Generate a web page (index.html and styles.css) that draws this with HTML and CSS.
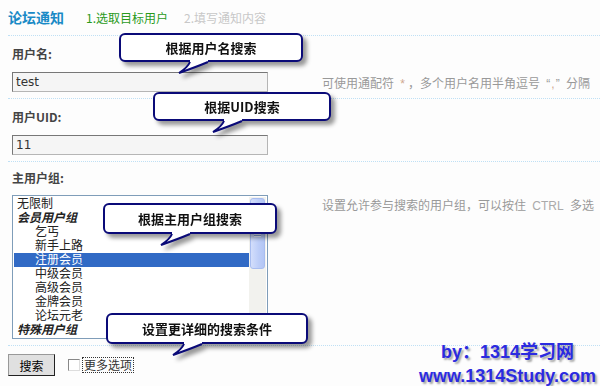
FILE: index.html
```html
<!DOCTYPE html>
<html lang="zh-CN">
<head>
  <meta charset="UTF-8">
  <title>论坛通知</title>
  <link rel="stylesheet" href="styles.css">
</head>
<body>
  <div class="page">
    <div class="header">
      <h1 class="title">论坛通知</h1>
      <span class="step step-active">1.选取目标用户</span>
      <span class="step">2.填写通知内容</span>
    </div>

    <div class="row">
      <div class="label">用户名:</div>
      <div class="field">
        <input class="text-input" type="text" value="test">
        <span class="hint">可使用通配符 <em>*</em>，多个用户名用半角逗号 <span class="quote">“<em>,</em>”</span> 分隔</span>
      </div>
    </div>

    <div class="row">
      <div class="label">用户UID:</div>
      <div class="field">
        <input class="text-input" type="text" value="11">
      </div>
    </div>

    <div class="row row-list">
      <div class="label">主用户组:</div>
      <div class="field field-top">
        <div class="listbox">
          <ul class="options">
            <li>无限制</li>
            <li class="group">会员用户组</li>
            <li class="sub">乞丐</li>
            <li class="sub">新手上路</li>
            <li class="sub selected">注册会员</li>
            <li class="sub">中级会员</li>
            <li class="sub">高级会员</li>
            <li class="sub">金牌会员</li>
            <li class="sub">论坛元老</li>
            <li class="group">特殊用户组</li>
          </ul>
          <div class="scrollbar">
            <div class="thumb"><span class="grip"></span></div>
          </div>
        </div>
        <span class="hint hint-top">设置允许参与搜索的用户组，可以按住 <span class="latin">CTRL</span> 多选</span>
      </div>
    </div>

    <div class="actions">
      <button class="btn" type="button">搜索</button>
      <label class="more"><input type="checkbox"><span class="more-text">更多选项</span></label>
    </div>

    <!-- annotation bubbles -->
    <div class="callout callout-name">根据用户名搜索
      <svg class="tail" width="32" height="16" viewBox="0 0 32 16"><path d="M12 0 L30 0 L30 2 Q18 7 1 13 Q10 7 12 2 Z" fill="#fff"/><path d="M12 2 Q10 7 1 13 Q18 7 30 2" fill="none" stroke="#0a0a78" stroke-width="2"/></svg>
    </div>
    <div class="callout callout-uid">根据UID搜索
      <svg class="tail" width="32" height="16" viewBox="0 0 32 16"><path d="M12 0 L30 0 L30 2 Q18 7 1 13 Q10 7 12 2 Z" fill="#fff"/><path d="M12 2 Q10 7 1 13 Q18 7 30 2" fill="none" stroke="#0a0a78" stroke-width="2"/></svg>
    </div>
    <div class="callout callout-group">根据主用户组搜索
      <svg class="tail" width="32" height="16" viewBox="0 0 32 16"><path d="M12 0 L30 0 L30 2 Q18 7 1 13 Q10 7 12 2 Z" fill="#fff"/><path d="M12 2 Q10 7 1 13 Q18 7 30 2" fill="none" stroke="#0a0a78" stroke-width="2"/></svg>
    </div>
    <div class="callout callout-more">设置更详细的搜索条件
      <svg class="tail" width="32" height="16" viewBox="0 0 32 16"><path d="M12 0 L30 0 L30 2 Q18 7 1 13 Q10 7 12 2 Z" fill="#fff"/><path d="M12 2 Q10 7 1 13 Q18 7 30 2" fill="none" stroke="#0a0a78" stroke-width="2"/></svg>
    </div>

    <div class="watermark">
      <div>by：1314学习网</div>
      <div>www.1314Study.com</div>
    </div>
  </div>
</body>
</html>
```

FILE: styles.css
```css
* {
  margin: 0;
  padding: 0;
  box-sizing: border-box;
}

body {
  background: #fdfdfd;
  font-family: "DejaVu Sans", "Noto Sans CJK SC", sans-serif;
  font-size: 12px;
  color: #333;
}

.page {
  position: relative;
  width: 600px;
  height: 386px;
  padding-left: 8px;
  overflow: hidden;
}

.header {
  height: 36px;
  display: flex;
  align-items: baseline;
  padding-top: 9px;
  border-bottom: 1px dotted #bfe0f5;
}

.title {
  font-family: "Noto Sans CJK SC", sans-serif;
  font-size: 14px;
  line-height: 16px;
  font-weight: bold;
  color: #1a8ac6;
}

.step {
  margin-left: 16px;
  font-family: "Noto Sans CJK SC", sans-serif;
  color: #c8c8c8;
}

.step-active {
  margin-left: 22px;
  color: #2a9a1c;
}

.row {
  padding: 10px 0 6px 4px;
  border-bottom: 1px dotted #bfe0f5;
}

.label {
  font-family: "Noto Sans CJK SC", sans-serif;
  font-weight: bold;
  line-height: 16px;
  color: #444;
}

.field {
  display: flex;
  align-items: center;
  margin-top: 10px;
}

.field-top {
  align-items: flex-start;
  margin-top: 9px;
}

.text-input {
  width: 256px;
  height: 20px;
  padding: 0 3px;
  border: 1px solid #b5b5b5;
  border-top-color: #777;
  border-left-color: #777;
  background: #f5f5f5;
  font-family: "DejaVu Sans", "Noto Sans CJK SC", sans-serif;
  font-size: 12px;
  color: #333;
}

.hint {
  margin-left: 54px;
  font-family: "Liberation Sans", "Noto Sans CJK SC", sans-serif;
  color: #999;
  white-space: nowrap;
}

.hint em {
  font-style: normal;
  color: #d0a890;
  margin: 0 3px;
}

.quote {
  margin: 0 3px;
}

.quote em {
  margin: 0 1px;
}

.hint-top {
  padding-top: 1px;
}

.latin {
  margin: 0 3px;
  color: #aaa;
}

.row-list {
  padding-top: 8px;
}

.listbox {
  display: flex;
  width: 256px;
  height: 144px;
  padding: 1px;
  border: 1px solid #7f9db9;
  background: #fff;
}

.options {
  flex: 1;
  list-style: none;
  font-family: "Liberation Sans", "Noto Sans CJK SC", sans-serif;
  font-size: 12px;
  line-height: 14px;
  color: #222;
}

.options li {
  height: 14px;
  padding-left: 3px;
  white-space: nowrap;
}

.options .group {
  font-weight: bold;
  font-style: italic;
}

.options .sub {
  padding-left: 21px;
}

.options .selected {
  background: #316ac5;
  color: #fff;
}

.scrollbar {
  width: 17px;
  background: #f2f2ee;
  padding: 0 1px;
}

.thumb {
  height: 71px;
  margin-top: 1px;
  border: 1px solid #a8bdf0;
  border-radius: 3px;
  background: linear-gradient(to right, #d3defb, #bccdf8 60%, #b3c6f5);
  display: flex;
  align-items: center;
  justify-content: center;
}

.grip {
  width: 7px;
  height: 7px;
  background: repeating-linear-gradient(to bottom, #eef3ff 0 1px, #8ca5df 1px 2px);
}

.actions {
  display: flex;
  align-items: center;
  padding-top: 8px;
}

.btn {
  width: 47px;
  height: 22px;
  border: 1px solid #222;
  border-top-color: #999;
  border-left-color: #999;
  background: #e0e0e0;
  font-family: "Noto Sans CJK SC", sans-serif;
  font-size: 12px;
  color: #000;
}

.more {
  display: flex;
  align-items: center;
  margin-left: 13px;
  font-family: "Noto Sans CJK SC", sans-serif;
  color: #333;
}

.more input {
  appearance: none;
  width: 12px;
  height: 12px;
  border: 1px solid #888;
  border-right-color: #ddd;
  border-bottom-color: #ddd;
  background: #fff;
  margin-right: 3px;
}

.more-text {
  outline: 1px dotted #333;
  line-height: 14px;
  padding: 0 1px;
}

.callout {
  position: absolute;
  height: 29px;
  border: 2px solid #0a0a78;
  border-radius: 6px;
  background: #fff;
  font-family: "Noto Sans CJK SC", sans-serif;
  font-size: 13px;
  font-weight: bold;
  line-height: 25px;
  text-align: center;
  color: #111;
  filter: drop-shadow(4px 4px 2px rgba(0, 0, 0, 0.4));
}

.tail {
  position: absolute;
  top: 100%;
  display: block;
}

.callout-name {
  left: 119px;
  top: 33px;
  width: 184px;
}

.callout-name .tail {
  left: 57px;
}

.callout-uid {
  left: 153px;
  top: 92px;
  width: 178px;
}

.callout-uid .tail {
  left: 57px;
}

.callout-group {
  left: 103px;
  top: 203px;
  width: 174px;
  height: 31px;
  line-height: 27px;
}

.callout-group .tail {
  left: 55px;
}

.callout-more {
  left: 106px;
  top: 313px;
  width: 202px;
  height: 31px;
  line-height: 27px;
}

.callout-more .tail {
  left: 64px;
}

.watermark {
  position: absolute;
  right: 4px;
  top: 340px;
  font-family: "Liberation Sans", "Noto Sans CJK SC", sans-serif;
  font-size: 18px;
  font-weight: bold;
  line-height: 24px;
  text-align: center;
  color: #2b2be0;
  text-shadow: 2px 2px 2px rgba(0, 0, 0, 0.35);
}
```
